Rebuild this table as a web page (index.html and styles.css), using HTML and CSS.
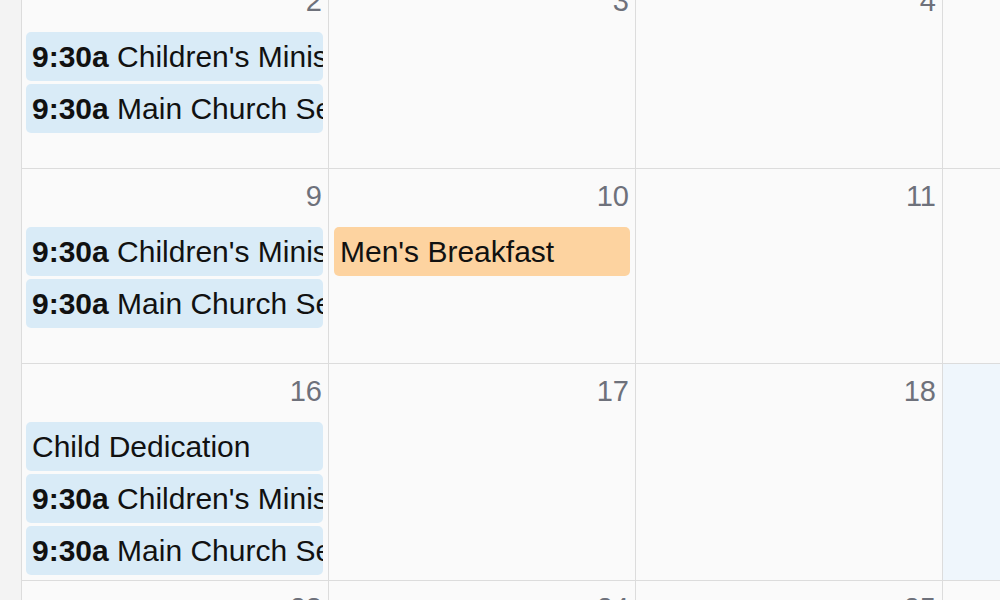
FILE: index.html
```html
<!DOCTYPE html>
<html lang="en">
<head>
<meta charset="utf-8">
<title>Calendar</title>
<link rel="stylesheet" href="styles.css">
</head>
<body>
<div class="page">
  <div class="gutter"></div>
  <div class="month">
    <div class="week">
      <div class="day"><div class="num">2</div>
        <div class="event blue"><b>9:30a</b> Children's Ministry</div>
        <div class="event blue"><b>9:30a</b> Main Church Service</div>
      </div>
      <div class="day"><div class="num">3</div></div>
      <div class="day"><div class="num">4</div></div>
      <div class="day"><div class="num">5</div></div>
    </div>
    <div class="week">
      <div class="day"><div class="num">9</div>
        <div class="event blue"><b>9:30a</b> Children's Ministry</div>
        <div class="event blue"><b>9:30a</b> Main Church Service</div>
      </div>
      <div class="day"><div class="num">10</div>
        <div class="event orange">Men's Breakfast</div>
      </div>
      <div class="day"><div class="num">11</div></div>
      <div class="day"><div class="num">12</div></div>
    </div>
    <div class="week">
      <div class="day"><div class="num">16</div>
        <div class="event blue">Child Dedication</div>
        <div class="event blue"><b>9:30a</b> Children's Ministry</div>
        <div class="event blue"><b>9:30a</b> Main Church Service</div>
      </div>
      <div class="day"><div class="num">17</div></div>
      <div class="day"><div class="num">18</div></div>
      <div class="day today"><div class="num">19</div></div>
    </div>
    <div class="week">
      <div class="day"><div class="num">23</div></div>
      <div class="day"><div class="num">24</div></div>
      <div class="day"><div class="num">25</div></div>
      <div class="day"><div class="num">26</div></div>
    </div>
  </div>
</div>
</body>
</html>
```
FILE: styles.css
```css
html, body {
  margin: 0;
  padding: 0;
  background: #fafafa;
  overflow: hidden;
  height: 600px;
}
body {
  font-family: "Liberation Sans", Arial, Helvetica, sans-serif;
}
.page {
  display: flex;
  height: 600px;
  overflow: hidden;
}
.gutter {
  flex: 0 0 21px;
  background: #f3f3f3;
  border-right: 1px solid #dcdcdc;
}
.month {
  flex: 0 0 auto;
  margin-top: -26px;
}
.week {
  display: grid;
  grid-template-columns: repeat(4, 307px);
}
.day {
  box-sizing: border-box;
  min-height: 195px;
  padding: 10px 0 2px;
  border-right: 1px solid #dcdcdc;
  border-bottom: 1px solid #dcdcdc;
  background: #fafafa;
}
.day.today {
  background: #eff6fc;
}
.num {
  font-size: 29px;
  line-height: 34px;
  color: #6e717b;
  text-align: right;
  padding-right: 6px;
  margin-bottom: 14px;
}
.event {
  box-sizing: border-box;
  height: 49px;
  line-height: 49px;
  margin: 0 5px 3px 4px;
  padding: 0 1px 0 6px;
  border-radius: 5px;
  font-size: 30px;
  color: #111;
  white-space: nowrap;
  overflow: hidden;
}
.event b {
  font-weight: bold;
}
.event.blue {
  background: #d9ebf7;
}
.event.orange {
  background: #fdd3a0;
  margin-left: 5px;
}
```
